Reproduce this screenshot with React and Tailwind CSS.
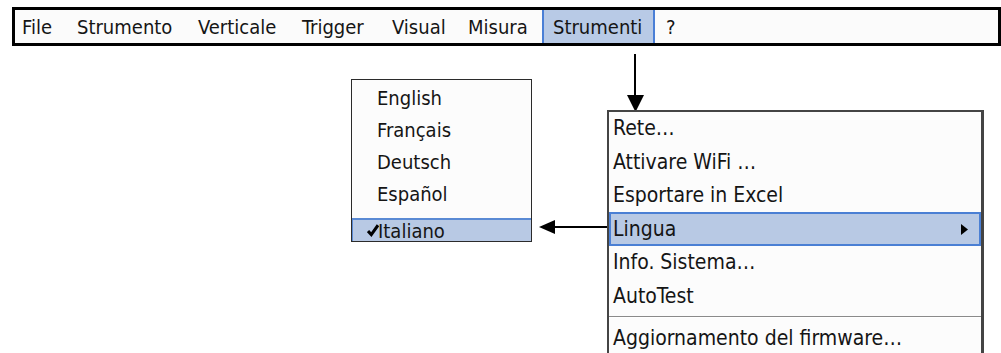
export default function App() {
  const font = "font-['DejaVu_Sans_Condensed','DejaVu_Sans',sans-serif]";
  return (
    <div className={`relative w-[1001px] h-[353px] bg-white overflow-hidden text-[#151515] ${font}`}>
      {/* Menu bar */}
      <div className="ml-[12px] mt-[7px] w-[989px] h-[39px] border-[3px] border-black bg-[#fbfbfb] flex text-[20px] leading-none">
        <div className="w-[50px] pl-[7px] flex items-center">File</div>
        <div className="w-[121px] pl-[12px] flex items-center">Strumento</div>
        <div className="w-[104px] pl-[12px] flex items-center">Verticale</div>
        <div className="w-[90px] pl-[12px] flex items-center">Trigger</div>
        <div className="w-[76px] pl-[12px] flex items-center">Visual</div>
        <div className="w-[86px] pl-[12px] flex items-center">Misura</div>
        <div className="w-[113px] pl-[9px] flex items-center bg-[#b8cae6] border-x-2 border-[#4a7fd6]">Strumenti</div>
        <div className="pl-[11px] flex items-center">?</div>
      </div>

      {/* Vertical arrow from Strumenti */}
      <div className="absolute left-[634px] top-[54px] w-[2px] h-[42px] bg-black" />
      <svg className="absolute left-[627px] top-[95px]" width="17" height="17" viewBox="0 0 17 17">
        <polygon points="0,0 17,0 8.5,17" fill="black" />
      </svg>

      {/* Language submenu */}
      <div className="absolute left-[351px] top-[79px] w-[181px] h-[163px] border border-[#2b2b2b] bg-[#fcfcfc] text-[20px] leading-none flex flex-col">
        <div className="h-[2px]" />
        <div className="h-[32px] pl-[25px] flex items-center">English</div>
        <div className="h-[32px] pl-[25px] flex items-center">Français</div>
        <div className="h-[32px] pl-[25px] flex items-center">Deutsch</div>
        <div className="h-[32px] pl-[25px] flex items-center">Español</div>
        <div className="flex-1" />
        <div className="relative h-[23px] pl-[25px] flex items-center bg-[#b8c9e4] border-t-2 border-l border-[#5a8ad4]">
          <svg className="absolute left-[14px] top-[4px]" width="12" height="13" viewBox="0 0 12 13">
            <path d="M1 7 L4.3 10.6 L11 1.2" fill="none" stroke="black" strokeWidth="3" strokeLinejoin="miter" />
          </svg>
          Italiano
        </div>
      </div>

      {/* Left arrow */}
      <div className="absolute left-[554px] top-[226px] w-[54px] h-[2px] bg-black" />
      <svg className="absolute left-[539px] top-[220px]" width="16" height="14" viewBox="0 0 16 14">
        <polygon points="0,7 16,0 16,14" fill="black" />
      </svg>

      {/* Strumenti dropdown */}
      <div className="absolute left-[607px] top-[110px] w-[377px] h-[260px] border-2 border-r-[3px] border-[#444] bg-[#fcfcfc] text-[21px] leading-none flex flex-col">
        <div className="h-[33px] pl-[4px] flex items-center">Rete…</div>
        <div className="h-[34px] pl-[4px] flex items-center">Attivare WiFi …</div>
        <div className="h-[33px] pl-[4px] flex items-center">Esportare in Excel</div>
        <div className="h-[34px] pl-[2px] flex items-center justify-between bg-[#b8c9e4] border-2 border-[#4a7fd4]">
          <span>Lingua</span>
          <svg className="mr-[11px]" width="7" height="11" viewBox="0 0 7 11">
            <polygon points="0,0 7,5.5 0,11" fill="black" />
          </svg>
        </div>
        <div className="h-[33px] pl-[4px] flex items-center">Info. Sistema…</div>
        <div className="h-[34px] pl-[4px] flex items-center">AutoTest</div>
        <div className="h-[8px] flex items-center">
          <div className="w-full h-[2px] bg-[#8a8a8a] border-b border-white" />
        </div>
        <div className="h-[34px] pl-[4px] flex items-center">Aggiornamento del firmware…</div>
      </div>
    </div>
  );
}
